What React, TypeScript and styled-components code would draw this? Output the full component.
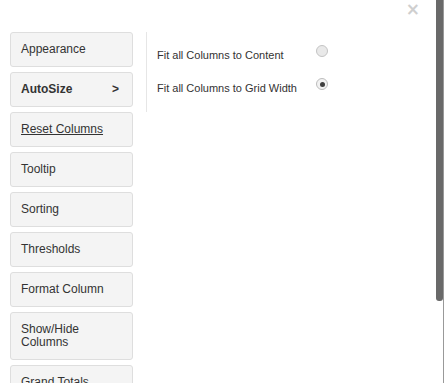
import React from "react";
import styled, { createGlobalStyle } from "styled-components";

const Global = createGlobalStyle`
  html, body { margin: 0; padding: 0; background: #fff; overflow: hidden; }
  body { font-family: "Liberation Sans", Arial, sans-serif; color: #333; }
`;

const Page = styled.div`
  position: relative;
  display: flex;
  width: 444px;
  height: 383px;
  overflow: hidden;
`;

const Main = styled.div`
  flex: 1;
  display: flex;
  align-items: flex-start;
  padding: 32px 0 0 10px;
`;

const Menu = styled.div`
  display: flex;
  flex-direction: column;
  gap: 5px;
  width: 123px;
  flex-shrink: 0;
`;

const MenuButton = styled.div<{ $tall?: boolean; $bold?: boolean; $underline?: boolean }>`
  box-sizing: border-box;
  display: flex;
  align-items: center;
  justify-content: space-between;
  height: ${(p) => (p.$tall ? "48px" : "35px")};
  padding: 0 13px 0 10px;
  background: #f4f4f4;
  border: 1px solid #dedede;
  border-radius: 3px;
  font-size: 12px;
  line-height: 13px;
  font-weight: ${(p) => (p.$bold ? 700 : 400)};
  text-decoration: ${(p) => (p.$underline ? "underline" : "none")};
  color: #333;
`;

const Label = styled.span<{ $wrap?: boolean }>`
  max-width: ${(p) => (p.$wrap ? "80px" : "none")};
`;

const Panel = styled.div`
  margin-left: 13px;
  border-left: 1px solid #e6e6e6;
  height: 68px;
  padding: 12px 0 0 10px;
  display: flex;
  flex-direction: column;
  gap: 11px;
`;

const OptionRow = styled.label`
  display: flex;
  align-items: center;
  justify-content: space-between;
  width: 171px;
  height: 22px;
  font-size: 11px;
  color: #333;
`;

const Radio = styled.input`
  appearance: none;
  -webkit-appearance: none;
  box-sizing: border-box;
  margin: 0 0 8px 0;
  width: 12px;
  height: 12px;
  border-radius: 50%;
  border: 1px solid #c4c4c4;
  background: #e9e9e9;
  position: relative;
  &:checked {
    background: #f2f2f2;
    border-color: #bdbdbd;
  }
  &:checked::after {
    content: "";
    position: absolute;
    left: 2.5px;
    top: 2.5px;
    width: 5px;
    height: 5px;
    border-radius: 50%;
    background: #3f3f3f;
  }
`;

const ScrollTrack = styled.div`
  width: 7px;
  flex-shrink: 0;
  border-right: 1px solid #999;
`;

const Thumb = styled.div`
  width: 7px;
  height: 301px;
  background: #696969;
  border-radius: 0 0 3px 3px;
`;

const Close = styled.div`
  position: absolute;
  top: 1px;
  right: 24px;
  font-size: 17px;
  line-height: 16px;
  color: #cfcfcf;
  font-family: "DejaVu Sans", sans-serif;
  font-weight: bold;
`;

const items: { label: string; bold?: boolean; underline?: boolean; tall?: boolean; arrow?: boolean }[] = [
  { label: "Appearance" },
  { label: "AutoSize", bold: true, arrow: true },
  { label: "Reset Columns", underline: true },
  { label: "Tooltip" },
  { label: "Sorting" },
  { label: "Thresholds" },
  { label: "Format Column" },
  { label: "Show/Hide Columns", tall: true },
  { label: "Grand Totals" },
];

export default function App() {
  return (
    <Page>
      <Global />
      <Main>
        <Menu>
          {items.map((it) => (
            <MenuButton key={it.label} $bold={it.bold} $underline={it.underline} $tall={it.tall}>
              <Label $wrap={it.tall}>{it.label}</Label>
              {it.arrow && <span>&gt;</span>}
            </MenuButton>
          ))}
        </Menu>
        <Panel>
          <OptionRow>
            <span>Fit all Columns to Content</span>
            <Radio type="radio" name="autosize" readOnly />
          </OptionRow>
          <OptionRow>
            <span>Fit all Columns to Grid Width</span>
            <Radio type="radio" name="autosize" defaultChecked readOnly />
          </OptionRow>
        </Panel>
      </Main>
      <ScrollTrack>
        <Thumb />
      </ScrollTrack>
      <Close>×</Close>
    </Page>
  );
}
